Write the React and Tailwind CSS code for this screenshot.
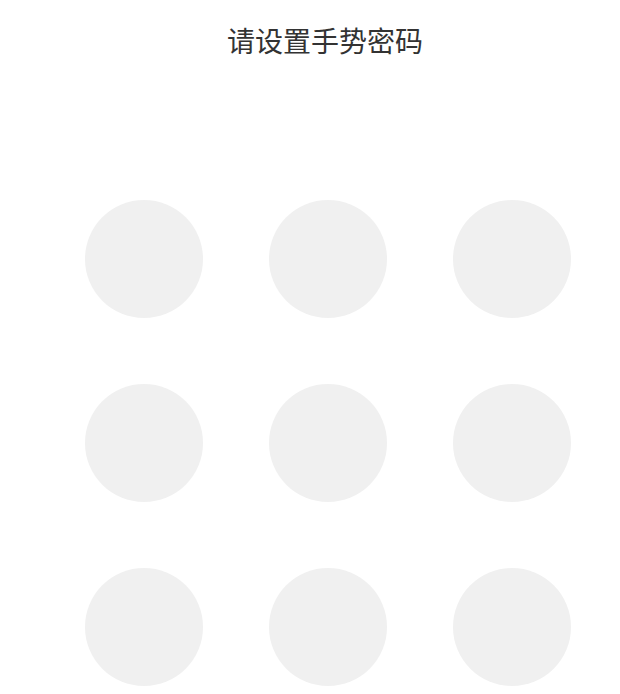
import React from "react";

const dots = [1, 2, 3, 4, 5, 6, 7, 8, 9];

const App = () => {
  return (
    <div className="bg-white w-[620px] h-[694px] overflow-hidden" style={{ fontFamily: '"Noto Sans CJK SC", "Noto Sans", sans-serif' }}>
      <div className="w-[486px] ml-[85px] flex flex-col items-center">
        <h1 className="mt-[24px] pr-[6px] text-[28px] leading-[32px] text-[#333333] font-normal">请设置手势密码</h1>
        <div className="mt-[144px] grid grid-cols-3 gap-x-[66px] gap-y-[66px]">
          {dots.map((d) => (
            <div key={d} className="w-[118px] h-[118px] rounded-full bg-[#f0f0f0]" />
          ))}
        </div>
      </div>
    </div>
  );
};

export default App;
